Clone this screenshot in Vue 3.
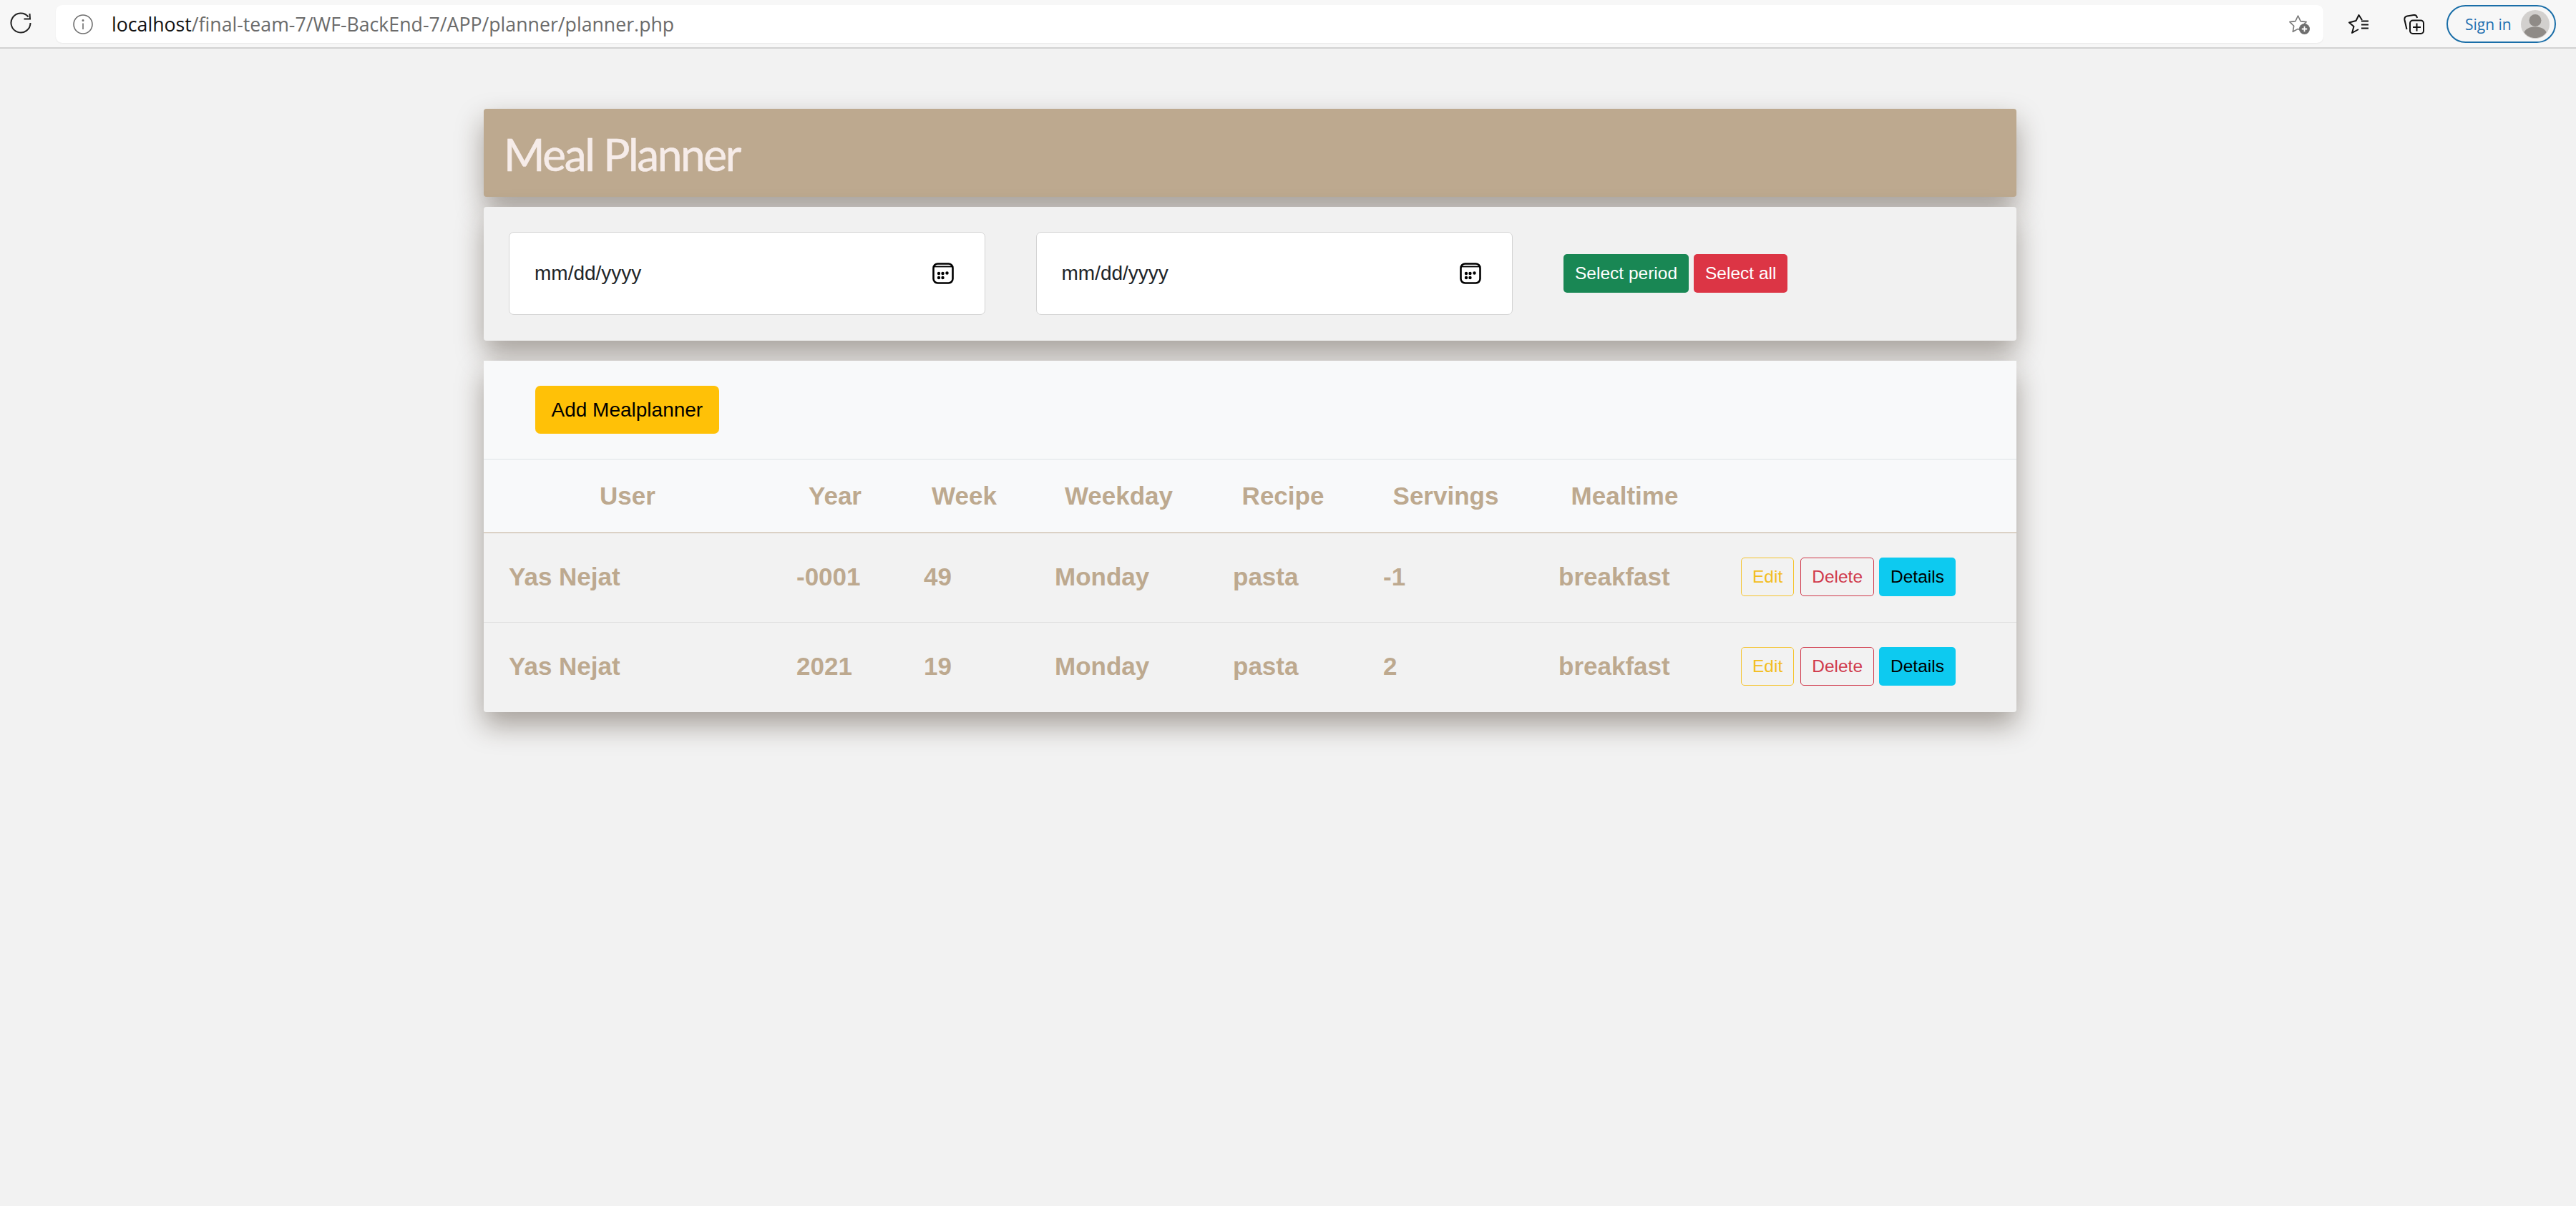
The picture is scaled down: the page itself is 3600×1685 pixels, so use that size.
<script setup>
const rows = [
  { user: 'Yas Nejat', year: '-0001', week: '49', weekday: 'Monday', recipe: 'pasta', servings: '-1', mealtime: 'breakfast' },
  { user: 'Yas Nejat', year: '2021', week: '19', weekday: 'Monday', recipe: 'pasta', servings: '2', mealtime: 'breakfast' },
]
const heads = ['User', 'Year', 'Week', 'Weekday', 'Recipe', 'Servings', 'Mealtime', '']
const dates = ['mm/dd/yyyy', 'mm/dd/yyyy']
</script>

<template>
  <div class="page">
    <header class="chrome">
      <svg class="reload" viewBox="0 0 30 30" fill="none" stroke="#222" stroke-width="2">
        <path d="M28.500 15A13.500 13.500 0 1 1 25.500 6.500" />
        <path d="M27.500 2L28 9.500H19.500" />
      </svg>
      <div class="omnibox">
        <svg class="info" viewBox="0 0 28 28" fill="none" stroke="#6f6f6f" stroke-width="1.600">
          <circle cx="14" cy="14" r="13" />
          <path d="M14 12.500V21" />
          <circle cx="14" cy="8.500" r="0.700" fill="#6f6f6f" />
        </svg>
        <span class="url"><span class="host">localhost</span>/final-team-7/WF-BackEnd-7/APP/planner/planner.php</span>
        <svg class="star-add" viewBox="0 0 30 28" fill="none">
          <path d="M13.500 2l3.600 7.600 8 1-5.800 5.700 1.400 8-7.200-3.900-7.200 3.900 1.400-8L1.900 10.600l8-1z" stroke="#777" stroke-width="1.600" stroke-linejoin="round" />
          <circle cx="22.500" cy="20.500" r="7.500" fill="#6e6e6e" />
          <path d="M22.500 16.800v7.400M18.800 20.500h7.400" stroke="#fff" stroke-width="1.800" />
        </svg>
      </div>
      <svg class="fav" viewBox="0 0 29 27" fill="none" stroke="#111" stroke-width="2">
        <path d="M19 8L14.500 1 10.500 9 1 11.500 7.500 17 5 26 14 21" stroke-linejoin="round" />
        <path d="M18 9.500h10M18 14.500h10M18 19.500h10" />
      </svg>
      <svg class="coll" viewBox="0 0 29 28" fill="none" stroke="#111" stroke-width="2">
        <path d="M4.500 21L1.500 8C1 5 2 3 5 2.400L14 1C17 .6 18.500 1.500 19 5" />
        <rect x="9" y="8.500" width="19" height="18.500" rx="4" />
        <path d="M18.500 12.500v11M13 18h11" />
      </svg>
      <div class="signin">
        <span>Sign in</span>
        <svg class="avatar" viewBox="0 0 40 40">
          <circle cx="20" cy="20" r="20" fill="#d2d0ce" />
          <circle cx="20" cy="14.500" r="8.500" fill="#8f8b87" />
          <path d="M4.500 31C7 26 12 23.500 20 23.500S33 26 35.500 31C32 36.500 26 39 20 39S8 36.500 4.500 31z" fill="#8f8b87" />
        </svg>
      </div>
    </header>

    <main class="planner">
      <div class="title-card card">
        <h1>Meal Planner</h1>
      </div>

      <section class="filter-card card">
        <div v-for="(date, i) in dates" :key="i" class="date-field">
          <span>{{ date }}</span>
          <svg class="cal" viewBox="0 0 30 30" fill="none" stroke="#000">
            <rect x="1.500" y="1.500" width="27" height="27" rx="6" stroke-width="2.600" />
            <path d="M2 5.500h26" stroke-width="1.800" />
            <g fill="#000" stroke="none">
              <circle cx="9" cy="15" r="2.200" />
              <circle cx="14.500" cy="15" r="2.200" />
              <circle cx="20.500" cy="14.500" r="2.200" />
              <circle cx="9" cy="21" r="2.200" />
              <circle cx="14.500" cy="21" r="2.200" />
            </g>
          </svg>
        </div>
        <div class="filter-actions">
          <button class="btn btn-sm green">Select period</button>
          <button class="btn btn-sm red">Select all</button>
        </div>
      </section>

      <section class="list-card card">
        <div class="add-bar">
          <button class="btn yellow">Add Mealplanner</button>
        </div>
        <table>
          <thead>
            <tr>
              <th v-for="(h, i) in heads" :key="i">{{ h }}</th>
            </tr>
          </thead>
          <tbody>
            <tr v-for="(r, i) in rows" :key="i">
              <td>{{ r.user }}</td>
              <td>{{ r.year }}</td>
              <td>{{ r.week }}</td>
              <td>{{ r.weekday }}</td>
              <td>{{ r.recipe }}</td>
              <td>{{ r.servings }}</td>
              <td>{{ r.mealtime }}</td>
              <td>
                <div class="row-actions">
                  <button class="btn btn-sm outline-yellow">Edit</button>
                  <button class="btn btn-sm outline-red">Delete</button>
                  <button class="btn btn-sm cyan">Details</button>
                </div>
              </td>
            </tr>
          </tbody>
        </table>
      </section>
    </main>
  </div>
</template>

<style>
html, body { margin: 0; background: #f2f2f2; }
</style>

<style scoped>
.page {
  min-height: 1685px;
  background: #f2f2f2;
  font-family: "Liberation Sans", Arial, sans-serif;
  box-sizing: border-box;
}
.chrome {
  height: 68px;
  box-sizing: border-box;
  background: #f7f7f7;
  border-bottom: 2px solid #d2d2d2;
  display: flex;
  align-items: center;
  padding: 1px 28px 0 14px;
}
.reload { width: 30px; height: 30px; margin-top: -3px; flex: none; }
.omnibox {
  margin-left: 34px;
  width: 3169px;
  height: 53px;
  background: #fff;
  border-radius: 9px;
  box-shadow: 0 1px 2px rgba(0,0,0,.06);
  display: flex;
  align-items: center;
  padding: 0 19px 0 24px;
  box-sizing: border-box;
  flex: none;
}
.info { width: 28px; height: 28px; flex: none; }
.url {
  margin-left: 26px;
  font-family: "Open Sans", sans-serif;
  font-size: 26.700px;
  color: #6b6b6b;
  white-space: nowrap;
}
.host { color: #111; }
.star-add { width: 30px; height: 28px; margin-left: auto; flex: none; }
.fav { width: 29px; height: 27px; margin-left: 35px; flex: none; }
.coll { width: 29px; height: 28px; margin-left: 48px; flex: none; }
.signin {
  margin-left: 31px;
  width: 153px;
  height: 53px;
  box-sizing: border-box;
  border: 2px solid #1a6ea8;
  border-radius: 27px;
  display: flex;
  align-items: center;
  justify-content: space-between;
  padding: 0 7px 0 24px;
  color: #1f6fb0;
  font-family: "Open Sans", sans-serif;
  font-size: 21px;
  flex: none;
}
.avatar { width: 40px; height: 40px; }

.planner {
  width: 2142px;
  margin: 84px 0 0 676px;
}
.card {
  border-radius: 4px;
  box-shadow: 0 18px 38px rgba(50, 35, 20, .4);
}
.title-card {
  height: 123px;
  box-sizing: border-box;
  background: #bda98f;
  padding: 2px 28px 0;
  display: flex;
  align-items: center;
  margin-bottom: 14px;
}
h1 {
  margin: 0;
  color: #f6ece9;
  font-family: "Lato", sans-serif;
  font-size: 62px;
  font-weight: 400;
  letter-spacing: -2.300px;
  -webkit-text-stroke: .6px #f6ece9;
  line-height: 1;
}
.filter-card {
  height: 187px;
  box-sizing: border-box;
  background: #f1f1f1;
  padding: 35px 36px 36px 35px;
  display: flex;
  align-items: center;
  gap: 70.500px;
  margin-bottom: 28px;
}
.date-field {
  width: 666px;
  height: 116px;
  box-sizing: border-box;
  background: #fff;
  border: 1px solid #d3d3d3;
  border-radius: 7px;
  padding: 0 43px 0 35px;
  display: flex;
  align-items: center;
  justify-content: space-between;
  font-size: 28px;
  color: #212529;
}
.cal { width: 30px; height: 30px; }
.filter-actions { display: flex; gap: 7px; margin-left: 1px; }
.btn {
  font-family: inherit;
  font-size: 28px;
  line-height: 1.5;
  padding: 0 20.500px;
  border: 2px solid transparent;
  border-radius: 7px;
  white-space: nowrap;
  cursor: pointer;
}
.btn-sm {
  font-size: 24.500px;
  height: 54px;
  padding: 0 14px;
  border-radius: 5px;
}
.green { background: #198754; color: #fff; }
.red { background: #dc3545; color: #fff; }
.yellow { background: #ffc107; color: #000; height: 67px; }
.cyan { background: #0dcaf0; color: #000; }
.outline-yellow { background: transparent; border: 1px solid #f5c32c; color: #f3bd20; padding: 0 15px; margin-right: 2px; }
.outline-red { background: transparent; border: 1px solid #d0394b; color: #d0394b; padding: 0 15px; }

.list-card {
  background: #f2f2f2;
  border-radius: 0 0 4px 4px;
}
.add-bar {
  height: 137px;
  box-sizing: border-box;
  background: #f8f9fa;
  padding: 35px 72px;
}
table {
  width: 2142px;
  table-layout: fixed;
  border-collapse: collapse;
  color: #bda98f;
  font-size: 35px;
  font-weight: 700;
}
th {
  height: 103px;
  background: #f8f9fa;
  text-align: center;
  padding: 0 35px;
  border-top: 1px solid #dee2e6;
  border-bottom: 1px solid #bda98f;
  box-sizing: border-box;
}
th:nth-child(1) { width: 402px; }
th:nth-child(2) { width: 178px; }
th:nth-child(3) { width: 183px; }
th:nth-child(4) { width: 249px; }
th:nth-child(5) { width: 210px; }
th:nth-child(6) { width: 245px; }
th:nth-child(7) { width: 255px; }
th:nth-child(8) { width: 420px; }
td {
  height: 125px;
  box-sizing: border-box;
  padding: 0 35px 2px;
  border-bottom: 1px solid #e0e0e0;
}
tbody tr:last-child td { border-bottom: 0; }
.row-actions { display: flex; gap: 7px; }
</style>
